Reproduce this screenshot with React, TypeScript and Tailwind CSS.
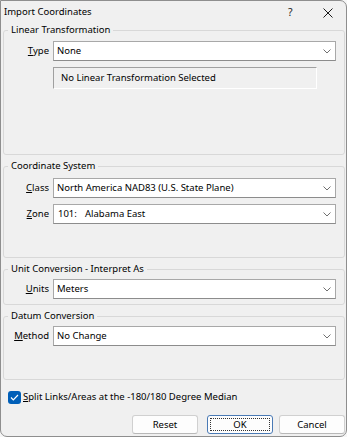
import React from "react";

function Chevron() {
  return (
    <svg
      width="8"
      height="5"
      viewBox="0 0 8 5"
      className="absolute right-[4px] top-[7px]"
    >
      <path d="M0.5 0.5 L4 4 L7.5 0.5" fill="none" stroke="#707070" strokeWidth="1" />
    </svg>
  );
}

function Select({ children }: { children: React.ReactNode }) {
  return (
    <div className="relative h-[20px] w-[283px] bg-white border border-[#a8a8a8] border-b-[#8c8c8c] flex items-center pl-[3px] text-black leading-none">
      {children}
      <Chevron />
    </div>
  );
}

function Row({ label, accel, children }: { label: string; accel: string; children: React.ReactNode }) {
  return (
    <div className="flex items-center">
      <div className="w-[45px] text-right text-black">
        <u className="underline-offset-[1px]">{accel}</u>
        {label}
      </div>
      <div className="ml-[4px]">{children}</div>
    </div>
  );
}

function Group({
  title,
  className,
  children,
}: {
  title: string;
  className: string;
  children: React.ReactNode;
}) {
  return (
    <fieldset className={"ml-[2px] mr-[1px] border border-[#d8d8d8] rounded-[3px] " + className}>
      <legend className="ml-[4px] px-[3px] leading-[14px] text-black">{title}</legend>
      {children}
    </fieldset>
  );
}

export default function App() {
  return (
    <div className="w-[347px] h-[437px] bg-[#f6f6f6] font-['Noto_Sans',sans-serif] text-[9.5px]">
      <div className="w-[347px] h-[437px] bg-[#f0f0f0] border border-[#8e8e8e] rounded-[7px] rounded-tl-none flex flex-col overflow-hidden">
        {/* title bar */}
        <div className="h-[22px] flex items-center relative shrink-0">
          <span className="pl-[3px] text-black text-[9.5px]">Import Coordinates</span>
          <span className="absolute left-[287px] top-[4px] text-[10.5px] text-[#1a1a1a]">?</span>
          <svg
            width="10"
            height="10"
            viewBox="0 0 10 10"
            className="absolute left-[322px] top-[7px]"
          >
            <path d="M0.5 0.5 L9.5 9.5 M9.5 0.5 L0.5 9.5" stroke="#1a1a1a" strokeWidth="1" />
          </svg>
        </div>

        <Group title="Linear Transformation" className="h-[132px] pt-[4px]">
          <Row label="ype" accel="T">
            <Select>None</Select>
          </Row>
          <div className="ml-[49px] mt-[6px] w-[264px] h-[22px] border border-t-[#a0a0a0] border-l-[#a0a0a0] border-r-white border-b-white flex items-center pl-[7px] text-black">
            No Linear Transformation Selected
          </div>
        </Group>

        <Group title="Coordinate System" className="h-[99px] mt-[4px] pt-[5px]">
          <Row label="lass" accel="C">
            <Select>North America NAD83 (U.S. State Plane)</Select>
          </Row>
          <div className="mt-[6px]">
            <Row label="one" accel="Z">
              <Select>
                <span className="inline-block w-[28px] pl-[1px]">101:</span>
                <span>Alabama East</span>
              </Select>
            </Row>
          </div>
        </Group>

        <Group title="Unit Conversion - Interpret As" className="h-[43px] mt-[4px] pt-[3px]">
          <Row label="nits" accel="U">
            <Select>Meters</Select>
          </Row>
        </Group>

        <Group title="Datum Conversion" className="h-[71px] mt-[4px] pt-[3px]">
          <Row label="ethod" accel="M">
            <Select>No Change</Select>
          </Row>
        </Group>

        <div className="mt-[10px] h-[14px] flex items-center pl-[7px]">
          <div className="w-[13px] h-[13px] rounded-[3px] bg-[#005fb8] flex items-center justify-center">
            <svg width="9" height="7" viewBox="0 0 9 7">
              <path d="M1 3.5 L3.3 5.8 L8 1" fill="none" stroke="white" strokeWidth="1.2" />
            </svg>
          </div>
          <span className="ml-[2px] text-black">
            <u className="underline-offset-[1px]">S</u>plit Links/Areas at the -180/180 Degree Median
          </span>
        </div>

        <div className="mt-[11px] flex justify-end pr-[1px]">
          <button className="h-[19px] w-[66px] bg-[#fdfdfd] border border-[#d0d0d0] border-b-[#b8b8b8] rounded-[3px] text-black leading-none">
            Reset
          </button>
          <button className="relative ml-[9px] h-[19px] w-[66px] bg-[#fdfdfd] border border-[#4a7ab5] rounded-[3px] text-black leading-none">
            <span className="absolute inset-[2px] border border-dotted border-[#333]" />
            OK
          </button>
          <button className="ml-[6px] h-[19px] w-[66px] bg-[#fdfdfd] border border-[#d0d0d0] border-b-[#b8b8b8] rounded-[3px] text-black leading-none">
            Cancel
          </button>
        </div>
      </div>
    </div>
  );
}
